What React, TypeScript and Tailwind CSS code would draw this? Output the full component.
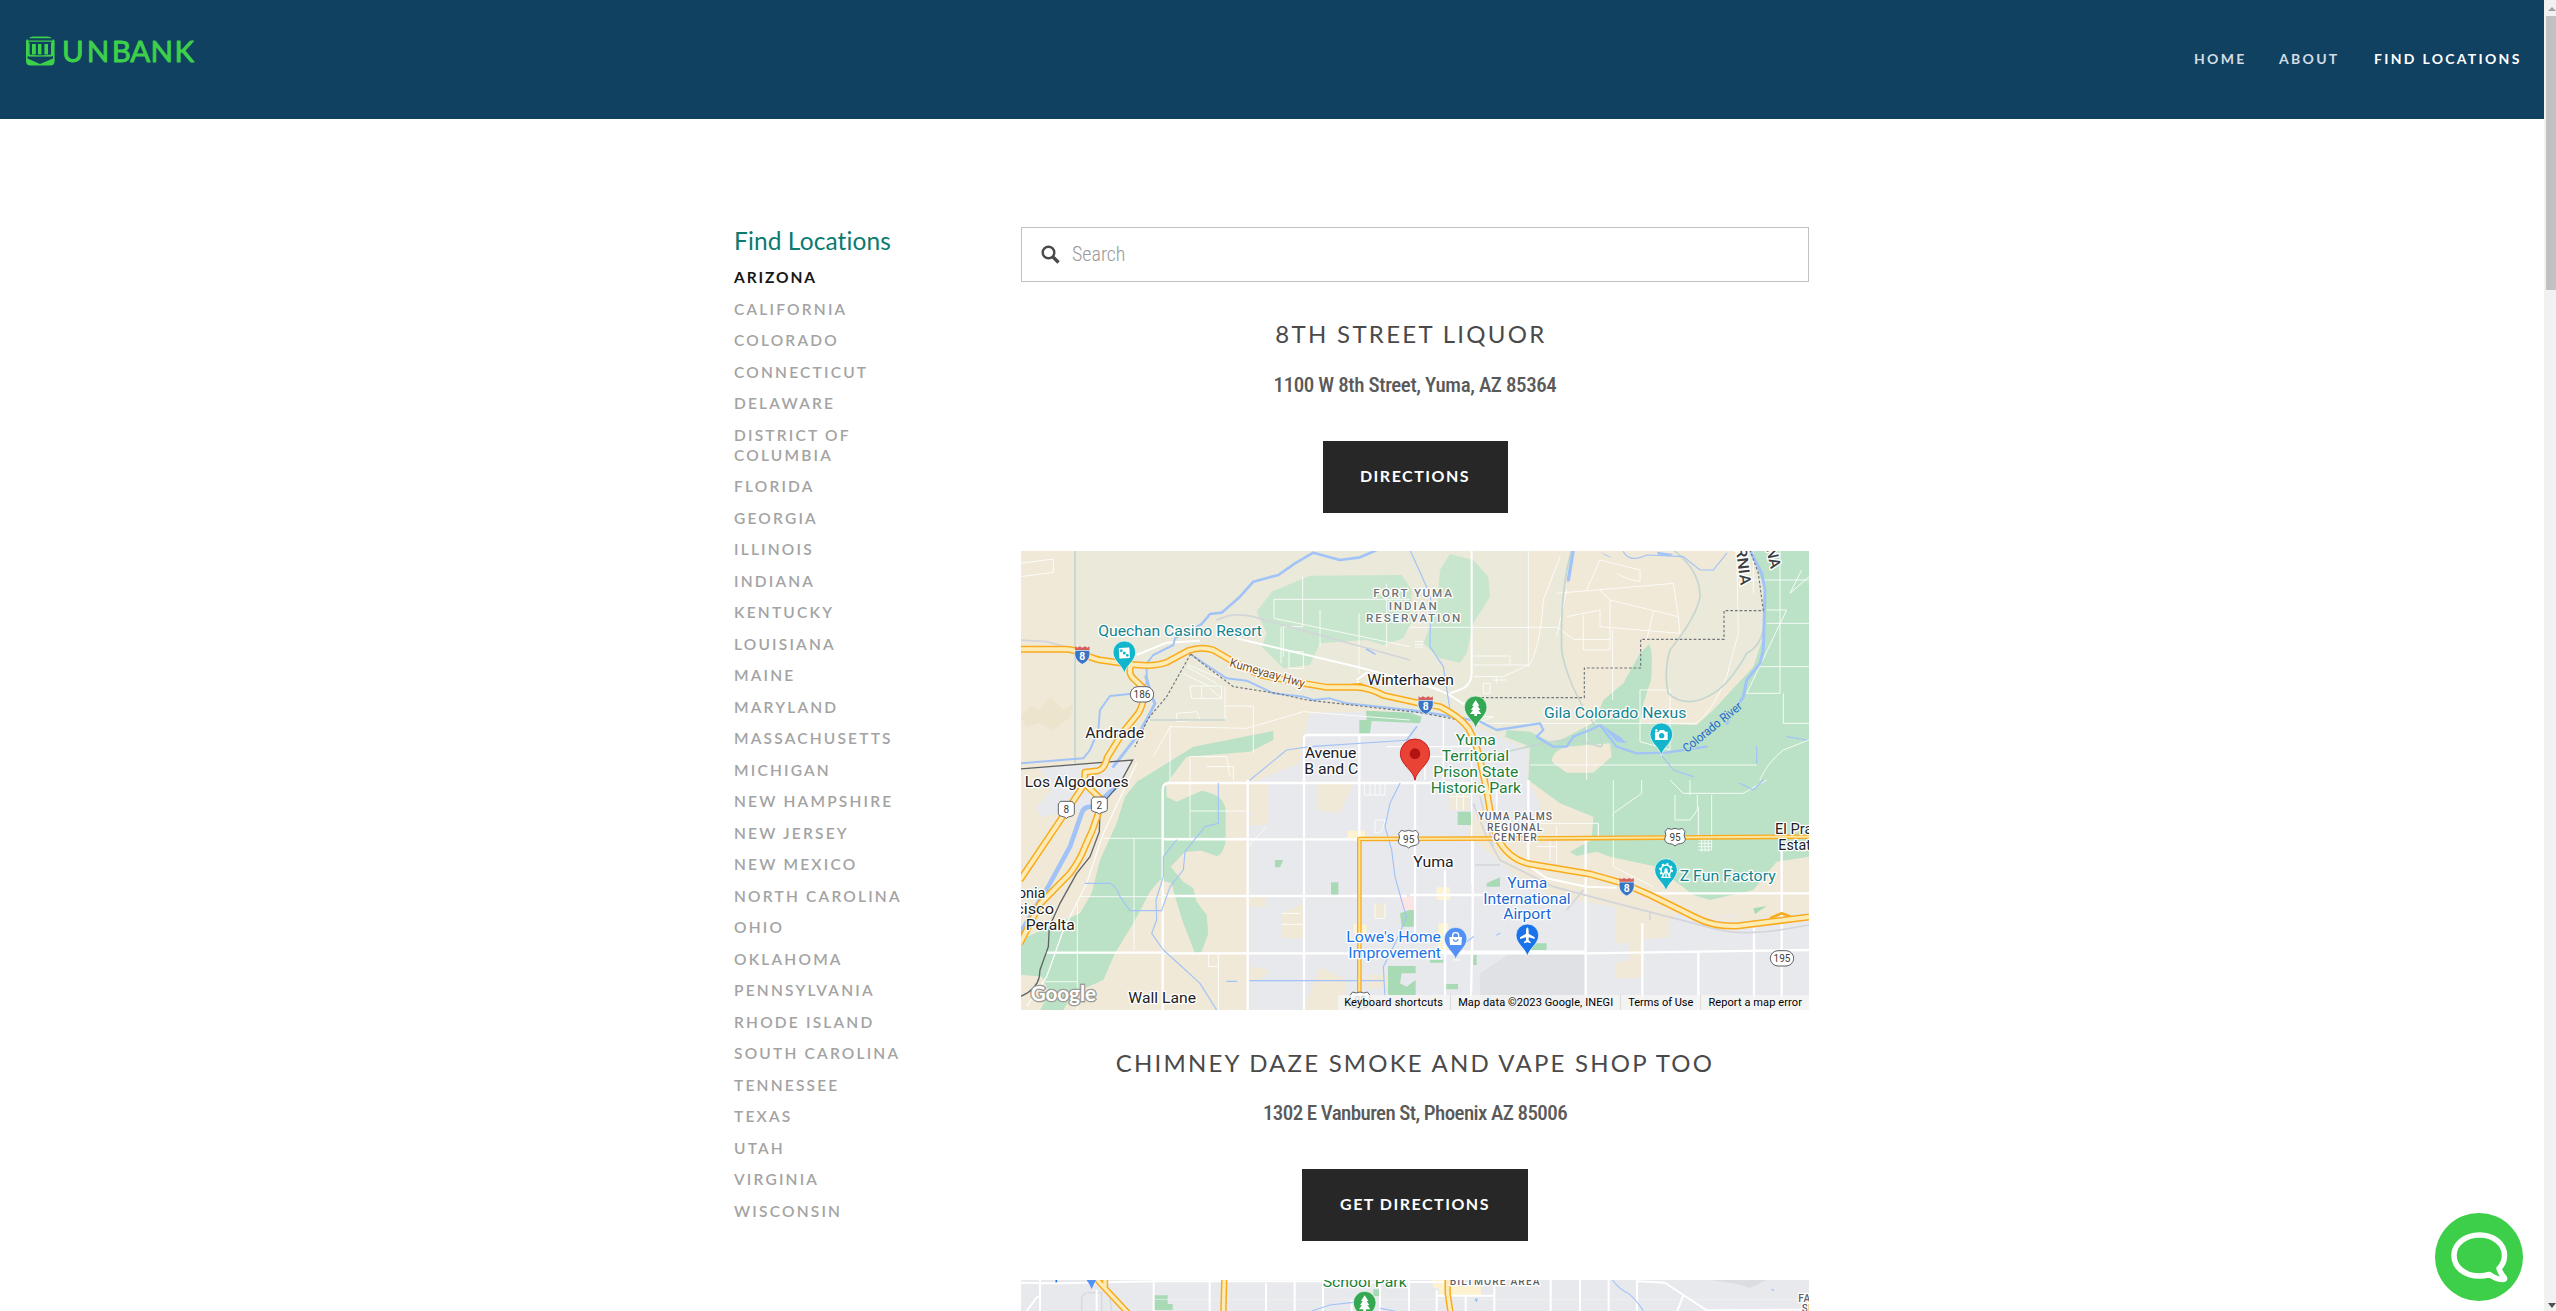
import type { ReactNode } from "react";

const states = [
  "Arizona", "California", "Colorado", "Connecticut", "Delaware", "District of Columbia", "Florida", "Georgia",
  "Illinois", "Indiana", "Kentucky", "Louisiana", "Maine", "Maryland", "Massachusetts", "Michigan",
  "New Hampshire", "New Jersey", "New Mexico", "North Carolina", "Ohio", "Oklahoma", "Pennsylvania",
  "Rhode Island", "South Carolina", "Tennessee", "Texas", "Utah", "Virginia", "Wisconsin",
];

function Logo() {
  return (
    <svg width="180" height="40" viewBox="20 30 180 40" role="img" aria-label="Unbank">
      <g fill="#3dd04a">
        <path d="M29 38.2Q30.5 36.6 33 36.6H47.5Q50.5 36.6 51.8 38.2Z" />
        <path d="M26 41Q26 39.4 28 39.2V40.4H52.5V39.2Q54.6 39.4 54.6 41V43.6H51.5V41.8H28.8V43.6H26Z" />
        <path d="M26 43H29.6V54.6L40 56H27.6V58.6L40 64 53 58.6V56H40L51 54.6V43H54.6V61Q54.6 65.6 50 65.6H30.6Q26 65.6 26 61Z" />
        <path d="M32 44H35.8V54.6H32ZM38 44H41.4V54.6H38ZM44.4 44H48V54.6H44.4Z" />
        <path d="M28.5 55.4H52V56.6H28.5Z" />
      </g>
      <text x="62 86.8 111.8 130.300 150.5 174.5" y="61.800" fontSize="29.500" fontWeight="400" fill="#3dd04a" stroke="#3dd04a" strokeWidth="0.9" strokeLinejoin="round" className="font-[Lato,sans-serif]">UNBANK</text>
    </svg>
  );
}

function Label({ x, y, w, size = 45, fill = "#202124", halo = "#fff", weight = 400, spacing = "spacingAndGlyphs", rotate = 0, children }: {
  x: number; y: number; w: number; size?: number; fill?: string; halo?: string; weight?: number;
  spacing?: "spacing" | "spacingAndGlyphs"; rotate?: number; children: ReactNode;
}) {
  return (
    <text x={x} y={y} textLength={w} lengthAdjust={spacing} fontSize={size} fontWeight={weight} fill={fill} stroke={halo}
      strokeWidth="8" strokeLinejoin="round" paintOrder="stroke" transform={rotate ? `rotate(${rotate} ${x} ${y})` : undefined}>
      {children}
    </text>
  );
}

function Pin({ x, y, fill, children }: { x: number; y: number; fill: string; children?: ReactNode }) {
  return (
    <g transform={`translate(${x} ${y})`}>
      <path d="M0 64C-4 40-34 26-34 0A34 34 0 0 1 34 0C34 26 4 40 0 64Z" fill={fill} stroke="#fff" strokeWidth="2" />
      {children}
    </g>
  );
}

function Tree() {
  return <path d="M0-22L11-5H6L14 8H8L17 20H4V26H-4V20H-17L-8 8H-14L-6-5H-11Z" fill="#fff" />;
}

function Interstate({ x, y }: { x: number; y: number }) {
  return (
    <g transform={`translate(${x} ${y})`}>
      <path d="M-22-14C-26 8-16 20 0 28 16 20 26 8 22-14Z" fill="#3a74c4" stroke="#fff" strokeWidth="2" />
      <path d="M-21-26L-15-22-8-26 0-22 8-26 15-22 21-26 22-15H-22Z" fill="#d65f5f" />
      <text y="15" textAnchor="middle" fontSize="31" fontWeight="700" fill="#fff">8</text>
    </g>
  );
}

function OvalShield({ x, y, children }: { x: number; y: number; children: string }) {
  return (
    <g transform={`translate(${x} ${y})`}>
      <rect x="-35" y="-23" width="70" height="46" rx="23" fill="#fff" stroke="#5f6368" strokeWidth="3" />
      <text y="11" textAnchor="middle" fontSize="30" fill="#3c4043">{children}</text>
    </g>
  );
}

function UsShield({ x, y }: { x: number; y: number }) {
  return (
    <g transform={`translate(${x} ${y})`}>
      <path d="M-22-26Q-12-20 0-26 12-20 22-26L30-16Q24-6 31 6 30 18 16 20 6 20 0 27-6 20-16 20-30 18-31 6-24-6-30-16Z" fill="#fff" stroke="#5f6368" strokeWidth="3" />
      <text y="11" textAnchor="middle" fontSize="30" fill="#3c4043">95</text>
    </g>
  );
}

function MexShield({ x, y, children }: { x: number; y: number; children: string }) {
  return (
    <g transform={`translate(${x} ${y})`}>
      <path d="M-18-25H18Q19-20 24-18V12Q24 18 14 20 5 21 0 26-5 21-14 20-24 18-24 12V-18Q-19-20-18-25Z" fill="#fff" stroke="#5f6368" strokeWidth="3" />
      <text y="11" textAnchor="middle" fontSize="30" fill="#3c4043">{children}</text>
    </g>
  );
}

const interstate8 = "M0 298H140C180 300 200 322 240 330L330 343Q400 352 440 337L505 302Q545 288 580 300L640 335 720 375 850 400 920 412H1010Q1050 414 1090 436L1200 460 1260 470Q1320 500 1345 535 1365 570 1378 620L1400 720 1410 780Q1420 840 1435 870 1470 930 1530 942L1710 972 1810 1000 1890 1035 2030 1104Q2080 1130 2150 1128L2367 1101";
const yumaRoads = [
  interstate8,
  "M333 345Q322 372 345 390L368 412Q378 450 355 490L310 545 262 622Q255 655 235 662L195 667 193 700 240 745 235 790Q220 840 195 890 180 930 150 970L60 1062 0 1180",
  "M195 700L120 812 0 990",
];

function YumaMap() {
  return (
    <svg viewBox="3 3 2364 1377" preserveAspectRatio="none" className="block h-full w-full font-[Roboto,sans-serif]">
      <rect width="2370" height="1380" fill="#f0e9d8" />
      {/* reservation land */}
      <path d="M165 0H1640L1630 250 1640 400 1700 520 1570 600 1525 650 1200 490 940 460 640 412 520 315 440 440 385 510 330 630 165 640Z" fill="#ebe9da" />
      <path d="M615 510H385L440 440 515 320 615 400Z" fill="#ebe9da" />
      <path d="M2030 70L2200 0 2235 120 2228 300 2100 420 2030 460 1960 440 1940 350 2000 240 2040 140Z" fill="#ebe9da" />
      <path d="M1527 0H1640L1600 80 1560 270 1527 350Z" fill="#f0e9d8" />
      {/* built-up land */}
      <path d="M870 490L1170 480 1330 515 1525 600V690L1565 690 1620 800 1500 900 1560 940 1900 1010 2060 1100 2367 1080V1380H975L980 1290 900 1250 850 1380H690V700L840 640 850 560Z" fill="#e8e9ed" />
      <path d="M60 655L330 635 310 690 290 730 200 780 60 800 50 770 95 720Z" fill="#e8e9ed" />
      <path d="M685 1040H735V1070H685ZM690 700H745V820H710L690 780ZM895 700H1000L960 790 890 780ZM690 800L740 800 740 825H690ZM785 1090L850 1060V1165H785ZM690 1250L750 1260 720 1290H690ZM1060 1060H1095V1105H1060ZM1290 730H1350V780H1290Z" fill="#f0e9d8" />
      <path d="M1565 690L1625 760 1720 800 1715 870 1800 910 1920 1000 2070 1100 2150 1100 2220 1050 2280 935 2367 920V1085L2150 1115 2060 1105 1980 1080 1950 1110V1160L1865 1170V1285H1785V1240L1830 1230V1180H1785V1070L1600 1040 1480 970 1350 860V800L1400 760 1460 830 1500 880 1560 870V760L1525 690Z" fill="#f0e9d8" />
      <path d="M1380 1270L1470 1210H1700V1380H1380Z" fill="#e0e1e5" />
      <path d="M1040 1315H1120V1275H1040Z" fill="#f0e9d8" />
      {/* parks and farmland */}
      <g fill="#c8e6cd">
        <path d="M710 185L755 125 870 77 1145 75 1175 120 1172 220 1150 265 1090 285 1040 270 900 280 870 345 790 355 725 290 740 250Z" />
        <path d="M1260 60L1290 12 1360 30 1405 80 1410 140 1360 220 1340 310 1320 338 1260 325 1210 280 1250 180Z" />
      </g>
      <g fill="#bbe2c6">
        <path d="M360 690L520 590 760 543 760 570 690 605 500 620 440 700Z" />
        <path d="M355 690H438L440 740 470 755 545 722Q617 735 617 785V870Q610 915 590 918L545 902 495 905 452 950 490 995 520 1015 530 1055 560 1095 565 1150 545 1205 527 1215 490 1120 465 1040 455 1000 420 990 390 1025 340 1120 285 1210 250 1290 160 1330 130 1380H60L90 1330 65 1280 0 1274V1170L180 1090 215 1030 240 930 290 820 315 740Z" />
        <path d="M2190 0H2367V920L2270 935 2200 1020 2070 1050 2020 1035 1910 950 1770 920 1730 905 1670 918 1650 905 1715 870 1720 800 1620 760 1525 690 1530 590 1455 560 1460 540 1530 545 1600 580 1640 560 1725 515 1750 450 1810 400 1860 310 1887 283Q1900 300 1893 390L1870 460 1860 520 2030 525 2080 480 2200 350 2230 260 2235 120Z" />
      </g>
      <path d="M1595 630Q1600 600 1640 590L1770 580 1775 620 1720 668H1640L1600 640Z" fill="#f0e9d8" />
      <g fill="#a8dab5">
        <path d="M1038 482L1170 488 1205 500 1200 520 1055 513 1050 550H1018V510H1040ZM765 930H790L780 952H765ZM933 997H955V1034H933ZM1104 1248H1187V1270H1145L1140 1300 1160 1310 1187 1290V1335H1104ZM1140 1090L1185 1075V1130H1145ZM1313 785H1352L1356 825H1313ZM1400 1000L1440 982V1010H1400ZM1276 1302H1314V1318H1276ZM1520 1180H1580V1200H1520ZM2200 1075L2240 1068 2205 1092ZM1360 1215H1370V1245H1360ZM1230 1230H1270V1238H1230Z" />
      </g>
      <path d="M983 842H1035V875H1010L983 865ZM1250 1012H1290V1050H1250ZM1255 1120H1285V1200H1255ZM1000 1120L1040 1125V1150H1000Z" fill="#fdf3d0" />
      <path d="M1132 1040H1185V1080H1150Z" fill="#fbe4e4" />
      <path d="M0 500L30 470 60 480 90 440 130 480 160 460 150 500 100 540 60 520 20 530Z" fill="#e9e1c9" opacity="0.7" />

      {/* thin local roads */}
      <g fill="none" stroke="#fff" strokeWidth="3" opacity="0.85">
        <path d="M0 40L100 27V67L0 80M848 80V230L790 230V320M762 148H1170M762 148V205L1170 290M1017 190V370M783 230V340M900 180V290M807 305H850V355H807ZM1100 100V290" />
        <path d="M615 468H700V610M450 530V690M390 512L380 510M400 620L450 530 680 535 850 485 1170 510M470 490L530 485 540 510 470 515ZM615 410V510M510 690V620H620L630 680M560 650H640V690" />
        <path d="M510 408H605V445H515ZM545 408V445M570 415L605 445M500 350L590 400M490 370L570 410M505 345L600 385" />
        <path d="M1525 0V345H1360M1170 232H1610M1360 318H1470V345M1360 380H1450L1525 345M1525 350Q1560 300 1570 150L1620 20M1610 130L1960 100M1610 230L1660 268H1770M1690 195V300H1770V150L1740 120M1770 150L1975 200L1980 250L1740 230V180L1640 200M1900 185L1880 270M1700 120L1740 30 1860 60V95L1820 85 1790 70M1960 100L1975 200M1640 120L1610 260M1778 240V450" />
        <path d="M2150 0 2155 250 2120 380Q2080 480 2030 520L1370 520 1420 500H1360M1530 645H2210M2200 0V130M2280 0V430H2180L2300 180H2240M2345 60L2310 130 2367 80M2170 90H2367M2240 220H2367M2210 350H2367M2220 690Q2240 640 2290 600L2367 570M2290 430V520H2367M1780 690V800M1865 690V730L1780 790V950L1900 1010M1950 690L1990 730H2170L2240 690M1965 735V810L2010 810 2032 780V735M2010 690L2010 735M2075 735V900M2035 770V860M1860 420V575L1950 600V420H1860M1700 520V690" />
        <path d="M250 865H680M342 865V1200M172 1060V1380M180 1040H425M75 1295H172M510 690V865M510 783H680M565 1210V1250H595V1210M595 1210V1380M683 890L740 830M785 1123H850M785 1090H840" />
        <path d="M1065 1060V1105M1095 1060V1105H1065M1033 700V735H1095V700M1050 700V735M1065 700V735M1080 700V735M1065 810H1095L1085 845 1065 850ZM1310 720V780M1330 720V780M1290 740H1350M1525 820H1735V870M1610 830V940M1590 870V930M1550 890H1610M1735 820V870" />
        <path d="M2035 870H2075M2035 880H2075M2035 890H2075M2035 900H2075M2045 865V905M2055 865V905M2065 865V905M1185 275H1210M1185 283H1210M1185 291H1210M1390 400H1410V430H1390ZM1420 390H1460M1430 380V400M1300 1230H1320" />
      </g>
      {/* arterials */}
      <g fill="none" stroke="#fff" strokeWidth="7">
        <path d="M428 1380V720Q428 700 445 699H1350M683 690V1380M852 1380V565Q852 555 865 555H1170M1018 555V870M425 868H1018M425 1038H1160M75 1208H420L450 1210H1700L2367 1200M1185 690V1160M1275 960V1380M1358 870V1110L1352 1380M1170 1035H1400M1697 870V1380M1867 1120V1380M2035 1205V1380M2202 1205V1380M2202 1205V1120M2285 880V1380M1900 1030H2367M1697 1205H1170M1525 690V940" />
        <path d="M350 315L440 278 540 272M650 265L1010 350 1200 400 1280 430 1360 480M1355 0V370Q1355 400 1330 415L1290 430M1200 400L1260 420M1430 720V760M1010 390L1040 368 1050 370M1530 950L1580 985 1700 1010 1790 1013M1010 395L1060 430" strokeWidth="6" />
        <path d="M1100 590H1355V1000M1270 500V700M1180 620H1340M1215 600V690M1430 690V850" strokeWidth="4" />
        <path d="M350 640L250 850 200 1000 130 1140 80 1280 20 1370" stroke="#fbfbfb" strokeWidth="4" />
      </g>
      {/* county lines, canals and rail */}
      <path d="M165 0V640M390 510H615M1655 0Q1620 120 1625 300 1640 400 1720 520 1760 590 1740 590 1660 560 1600 575 1520 590 1440 610M1960 0Q2040 60 2040 140 2030 200 1950 300 1930 370 1945 430 2000 480 2080 430 2130 400 2180 310 2220 290 2230 240" fill="none" stroke="#c3d6d0" strokeWidth="5" />
      <path d="M590 210Q640 185 700 200L1170 330M0 270L80 275 170 300M1360 760L1395 850 1440 930 1600 1010 1790 1060 2060 1130Q2150 1160 2280 1140L2367 1125M1640 1080L1690 1020M1380 740L1420 890M1365 945H1440M1890 1090V1110" fill="none" stroke="#d3d5da" strokeWidth="5" />
      {/* rivers */}
      <g fill="none" stroke="#a2c3f7" strokeLinecap="round" strokeLinejoin="round">
        <path d="M1070 0L1020 22 960 30 880 8 825 40 775 75 700 95 660 140 605 188 570 192 545 222" strokeWidth="8" />
        <path d="M545 222L465 265M465 265L460 285 400 315 380 340V400L350 430 270 438 240 480 235 540 210 600 190 625 0 640" strokeWidth="6" />
        <path d="M515 315L560 345 620 385 680 392 760 430 850 440 880 450 930 445 980 460 1170 480" strokeWidth="6" />
        <path d="M378 380L395 440 405 460 385 500 350 560 280 650" strokeWidth="9" />
        <path d="M300 700L250 745M215 770Q190 770 185 790L150 890 90 1000 0 1150" strokeWidth="14" />
        <path d="M1170 480L1300 500 1380 515 1430 540 1560 520 1570 540 1550 560 1600 590 1640 590 1660 560 1710 540 1740 525 1790 590 1850 610 1940 608 1990 600 2060 590" strokeWidth="7" />
        <path d="M2190 0L2225 70 2235 120 2230 300 2220 340 2180 390 2170 440 2120 520" strokeWidth="9" />
        <path d="M1660 0L1645 90" strokeWidth="10" />
        <path d="M1170 0L1215 100 1232 140 1230 290 1270 350 1290 480M195 1000H270Q290 1010 300 1040L330 1082H425L450 1010 490 960 495 905 555 830 595 820V700M470 870L430 920V980L408 1050 410 1110 395 1150 430 1200 480 1245 540 1300 590 1380M1140 700L1110 760 1095 830 1115 900 1125 980 1150 1070 1160 1100 1130 1170 1090 1250 1095 1340M690 690L800 600 870 590 1170 570M620 1294L650 1294M690 1292H1090M1340 1175L1360 1160M1430 1155L1440 1150M1810 5Q1830 40 1880 15L1990 20 2040 60 2080 60 2120 10M2160 700L2200 720 2230 690M1920 610L1960 660 2020 680M2210 590V640M2300 560L2360 570" strokeWidth="3.5" />
        <path d="M1040 298L1065 312M1160 570L1190 530" strokeWidth="5" />
      </g>
      <path d="M1745 525L1800 560 1820 580 1790 575ZM1910 5L1960 12 1950 18 1915 14ZM1740 5L1780 25 1760 18Z" fill="#a2c3f7" />
      {/* borders */}
      <path d="M512 312L440 440 385 505 345 590M512 312L560 350 640 410 770 430 860 450 1200 488 1330 512M1370 443H1693V354H1862V268H2112V182H2230L2215 70 2190 0" fill="none" stroke="#70757a" strokeWidth="3.500" strokeDasharray="8 6" />
      <path d="M0 657L338 630 300 700 240 770 238 845 210 920 170 970 120 1060 88 1130 85 1190 60 1260 58 1280Q50 1320 0 1340" fill="none" stroke="#5f6368" strokeWidth="4" />

      {/* highways */}
      <g fill="none" strokeLinejoin="round">
        <path d="M1018 1330V867L1600 865 2367 860" stroke="#f9ab1e" strokeWidth="14" />
        <path d="M1018 1330V867L1600 865 2367 860" stroke="#fbe5a3" strokeWidth="6" />
        {yumaRoads.map((d) => <path key={d} d={d} stroke="#f9ab1e" strokeWidth="21" />)}
        <path d="M960 410L1020 402 1080 430M1660 960L1700 965 1730 985M2250 1105L2285 1090 2320 1103" stroke="#f9ab1e" strokeWidth="8" />
        {yumaRoads.map((d) => <path key={d} d={d} stroke="#fdebb6" strokeWidth="12" />)}
      </g>

      {/* shields */}
      <Interstate x={187} y={315} />
      <Interstate x={1217} y={465} />
      <Interstate x={1820} y={1010} />
      <OvalShield x={366} y={433}>186</OvalShield>
      <OvalShield x={2286} y={1225}>195</OvalShield>
      <MexShield x={139} y={779}>8</MexShield>
      <MexShield x={238} y={766}>2</MexShield>
      <UsShield x={1166} y={867} />
      <UsShield x={1965} y={861} />
      <UsShield x={1020} y={1352} />

      {/* place names */}
      <Label x={1060} y={142} w={236} size={35} fill="#70757a" weight={500} spacing="spacing">FORT YUMA</Label>
      <Label x={1106} y={180} w={144} size={35} fill="#70757a" weight={500} spacing="spacing">INDIAN</Label>
      <Label x={1038} y={217} w={283} size={35} fill="#70757a" weight={500} spacing="spacing">RESERVATION</Label>
      <Label x={1042} y={404} w={260}>Winterhaven</Label>
      <Label x={196} y={564} w={176}>Andrade</Label>
      <Label x={854} y={625} w={155}>Avenue</Label>
      <Label x={853} y={672} w={162}>B and C</Label>
      <Label x={14} y={710} w={312}>Los Algodones</Label>
      <Label x={-42} y={1045} w={118}>olonia</Label>
      <Label x={-84} y={1092} w={186}>rancisco</Label>
      <Label x={17} y={1139} w={147}>Peralta</Label>
      <Label x={325} y={1358} w={203}>Wall Lane</Label>
      <Label x={1180} y={951} w={121}>Yuma</Label>
      <Label x={2265} y={851} w={162}>El Prado</Label>
      <Label x={2275} y={899} w={142}>Estates</Label>
      <Label x={1374} y={811} w={222} size={31} fill="#5f6368" weight={500} spacing="spacing">YUMA PALMS</Label>
      <Label x={1401} y={842} w={166} size={31} fill="#5f6368" weight={500} spacing="spacing">REGIONAL</Label>
      <Label x={1420} y={872} w={130} size={31} fill="#5f6368" weight={500} spacing="spacing">CENTER</Label>
      <Label x={2140} y={-68} w={176} size={46} fill="#3c4043" weight={500} rotate={83}>FORNIA</Label>
      <Label x={2216} y={-100} w={162} size={46} fill="#3c4043" weight={500} rotate={77}>RIZONA</Label>
      <Label x={235} y={259} w={491} fill="#12848f">Quechan Casino Resort</Label>
      <Label x={1572} y={505} w={427} fill="#12848f">Gila Colorado Nexus</Label>
      <Label x={1979} y={993} w={288} fill="#12848f">Z Fun Factory</Label>
      <Label x={1307} y={586} w={120} fill="#188038">Yuma</Label>
      <Label x={1265} y={633} w={202} fill="#188038">Territorial</Label>
      <Label x={1240} y={681} w={255} fill="#188038">Prison State</Label>
      <Label x={1232} y={728} w={271} fill="#188038">Historic Park</Label>
      <Label x={1462} y={1013} w={120} fill="#1967d2">Yuma</Label>
      <Label x={1390} y={1061} w={262} fill="#1967d2">International</Label>
      <Label x={1450} y={1108} w={143} fill="#1967d2">Airport</Label>
      <Label x={979} y={1176} w={284} fill="#1a73e8">Lowe's Home</Label>
      <Label x={985} y={1224} w={278} fill="#1a73e8">Improvement</Label>
      <Label x={627} y={349} w={232} size={37} fill="#7b4a12" rotate={16}>Kumeyaay Hwy</Label>
      <Label x={2001} y={609} w={216} size={37} fill="#1b66d1" halo="#bbe2c6" rotate={-39}>Colorado River</Label>

      {/* places */}
      <Pin x={313} y={307} fill="#12b5cb">
        <rect x="-16" y="-14" width="32" height="32" rx="3" fill="#fff" transform="rotate(-4)" />
        <g fill="#12b5cb"><circle cx="-9" cy="-5" r="4" /><circle cx="0" cy="2" r="4.5" /><circle cx="9" cy="9" r="4" /></g>
      </Pin>
      <Pin x={1367} y={472} fill="#34a853"><Tree /></Pin>
      <Pin x={1924} y={553} fill="#12b5cb">
        <path d="M-19-8H-8L-4-13H8L12-8H19V17H-19Z" fill="#fff" />
        <circle cx="1" cy="4" r="8" fill="#12b5cb" />
        <path d="M-15-16V-8M-19-12H-11" stroke="#fff" strokeWidth="3" />
      </Pin>
      <Pin x={1938} y={960} fill="#12b5cb">
        <circle r="15" fill="none" stroke="#fff" strokeWidth="4" />
        <circle r="18" fill="none" stroke="#fff" strokeWidth="6" strokeDasharray="6 8" />
        <path d="M0 0V22M-12 22L0 0 12 22Z" fill="#12b5cb" stroke="#fff" strokeWidth="4" />
        <circle r="5" fill="#fff" />
      </Pin>
      <Pin x={1522} y={1156} fill="#1a73e8">
        <path d="M0-24Q4-22 4-14V-5L22 6V11L4 6V15L10 20V24L0 21-10 24V20L-4 15V6L-22 11V6L-4-5V-14Q-4-22 0-24Z" fill="#fff" />
      </Pin>
      <Pin x={1307} y={1166} fill="#5491f5">
        <path d="M-19-5H19L17 19H-17Z" fill="#fff" />
        <path d="M-9-4V-10Q-9-18 0-18 9-18 9-10V-4" fill="none" stroke="#fff" strokeWidth="4" />
        <path d="M-8 2Q0 14 8 2" fill="none" stroke="#5491f5" strokeWidth="4" />
      </Pin>
      <path d="M1185 691C1181 660 1141 645 1141 611A44 44 0 0 1 1229 611C1229 645 1189 660 1185 691Z" fill="#ea4335" stroke="#c5221f" strokeWidth="3" />
      <circle cx="1185" cy="611" r="16" fill="#b31412" />
      <text x="32" y="1352" textLength="196" lengthAdjust="spacingAndGlyphs" fontSize="62" fontWeight="700" fill="#fff" stroke="#9a9a94" strokeWidth="8" paintOrder="stroke" className="font-[Lato,sans-serif]">Google</text>
    </svg>
  );
}

function PhoenixMap() {
  return (
    <svg viewBox="3 30 2364 93" preserveAspectRatio="none" className="block h-full w-full font-[Roboto,sans-serif]">
      <rect width="2370" height="124" fill="#e8e9ed" />
      <path d="M402 76H443V102H458V120H402ZM1060 58H1078V78H1060Z" fill="#a8dab5" />
      <path d="M1235 30H1290L1383 45V75H1257V56L1240 52Z" fill="#fdf3d0" />
      <path d="M2070 30L2150 42 2190 54 2240 30Z" fill="#dcdde1" />
      <path d="M185 123V85Q188 68 210 68H245V123M275 123L270 85" fill="none" stroke="#d6d8dc" strokeWidth="4" />
      <path d="M400 88H2367" stroke="#f1f2f4" strokeWidth="2" />
      <g fill="none" stroke="#fff" strokeWidth="6">
        <path d="M0 38L120 40 400 34H980L1100 40 1170 36H1270M60 30V123M20 123L50 82 60 80M230 60V123M401 30V123M569 30V123M738 40V123M824 30V123M909 30V123M995 90V123M1080 30V123M1167 30V123M1250 60V123M1337 75V123M1423 30V123M1423 77H1250M1592 30V123M1680 30V123M1766 30V123M1851 123V34L1935 38 1990 75 2060 121 2367 119M1990 75L1972 123" />
      </g>
      <path d="M875 123L930 105 1000 97M1080 115L1125 123M1777 30Q1800 60 1825 70 1850 90 1870 123M2255 57L2262 62" fill="none" stroke="#a2c3f7" strokeWidth="3.5" />
      <path d="M1364 86H1374L1369 97Z" fill="#8ab4f8" />
      <path d="M232 30L325 130M255 25V55M613 20L610 130M1283 20V70L1292 130" fill="none" stroke="#f9ab1e" strokeWidth="19" />
      <path d="M232 30L325 130M255 25V55M613 20L610 130M1283 20V70L1292 130" fill="none" stroke="#fdebb6" strokeWidth="10" />
      <path d="M198 28H230Q222 40 215 57 208 40 198 28Z" fill="#5491f5" />
      <path d="M109 24V37" stroke="#1a73e8" strokeWidth="5" />
      <Label x={908} y={51} w={252} fill="#188038">School Park</Label>
      <Label x={1289} y={46} w={270} size={31} fill="#5f6368" weight={500} spacing="spacing">BILTMORE AREA</Label>
      <Label x={2335} y={95} w={120} size={31} fill="#5f6368" weight={500} spacing="spacing">FALCON</Label>
      <Label x={2345} y={125} w={110} size={31} fill="#5f6368" weight={500} spacing="spacing">SPRING</Label>
      <Pin x={1034} y={98} fill="#34a853"><Tree /></Pin>
    </svg>
  );
}

export default function App() {
  return (
    <div className="flex h-[1311px] w-full overflow-hidden bg-white font-[Lato,sans-serif]">
      <div className="flex min-w-0 flex-1 flex-col">
        <header className="flex h-[119px] shrink-0 items-start justify-between bg-[#104161] pt-[30px] pr-[22px] pl-5">
          <Logo />
          <nav className="mt-[19px] flex text-[14px] leading-5 font-bold tracking-[2.3px] text-[#d3dce3] uppercase">
            <a className="w-[85px]">Home</a>
            <a className="w-[95px]">About</a>
            <a className="w-[148px] whitespace-nowrap text-white">Find Locations</a>
          </nav>
        </header>

        <main className="mx-auto flex w-[1076px]">
          <aside className="w-[287px] shrink-0 pt-[104px]">
            <h1 className="mb-2 text-[24.500px] leading-9 tracking-[0.1px] text-[#0a7b70]">Find Locations</h1>
            <ul className="flex w-[190px] flex-col gap-[11.5px] text-[15.500px] leading-5 font-semibold tracking-[2.2px] text-[#a3a3a3] uppercase">
              {states.map((s) => (
                <li key={s} className="pr-4 whitespace-normal first:font-bold first:tracking-[1.9px] first:text-[#161616] nth-[6]:w-[150px] not-nth-[6]:whitespace-nowrap">{s}</li>
              ))}
            </ul>
          </aside>

          <section className="flex w-[788px] flex-col items-center pt-[108px]">
            <div className="flex h-[55px] w-full items-center border border-[#c2c2c2] pl-[19px]">
              <svg width="19" height="19" viewBox="0 0 19 19" fill="none" stroke="#4a4a4a">
                <circle cx="7.5" cy="7.5" r="5.8" strokeWidth="2.4" />
                <path d="M12 12L17.5 17.5" strokeWidth="3.4" />
              </svg>
              <span className="ml-[12px] pb-px font-[Roboto,sans-serif] text-[20px] font-light text-[#999] [font-stretch:75%]">Search</span>
            </div>

            <h2 className="mt-[32px] pr-2 text-[24px] leading-10 tracking-[2.3px] text-[#4a4a4a] uppercase">8th Street Liquor</h2>
            <p className="mt-4 font-[Roboto,sans-serif] text-[21px] leading-[30px] font-medium tracking-[-0.4px] text-[#5a5a5a] [font-stretch:75%]">1100 W 8th Street, Yuma, AZ 85364</p>
            <a className="mt-[41px] flex h-[72px] w-[185px] items-center justify-center bg-[#272727] pb-0.5 text-[16px] font-bold tracking-[1.5px] text-white uppercase">Directions</a>
            <div className="relative mt-[38px] h-[459px] w-full shrink-0 overflow-hidden">
              <YumaMap />
              <div className="absolute right-0 bottom-0 flex h-[15px] items-center divide-x divide-[#dcdcdc] bg-[#f5f5f5]/80 font-[Roboto,sans-serif] text-[11px] leading-[15px] whitespace-nowrap text-black">
                <span className="pr-[7px] pl-1.5 tracking-[0.2px]">Keyboard shortcuts</span>
                <span className="px-[7px] tracking-[0.1px]">Map data ©2023 Google, INEGI</span>
                <span className="px-[7px]">Terms of Use</span>
                <span className="px-[7px] tracking-[0.1px]">Report a map error</span>
              </div>
            </div>

            <h2 className="mt-[33px] text-[24px] leading-10 tracking-[2.2px] whitespace-nowrap text-[#4a4a4a] uppercase">Chimney Daze Smoke and Vape Shop Too</h2>
            <p className="mt-[15px] font-[Roboto,sans-serif] text-[21px] leading-[30px] font-medium tracking-[-0.6px] text-[#5a5a5a] [font-stretch:75%]">1302 E Vanburen St, Phoenix AZ 85006</p>
            <a className="mt-[41px] flex h-[72px] w-[226px] items-center justify-center bg-[#272727] pb-0.5 text-[16px] font-bold tracking-[1.5px] text-white uppercase">Get Directions</a>
            <div className="mt-[39px] h-[31px] w-full shrink-0 overflow-hidden">
              <PhoenixMap />
            </div>
          </section>
        </main>
      </div>

      <div className="flex w-3 shrink-0 flex-col items-end justify-between bg-[#f1f1f1]">
        <svg width="12" height="290" viewBox="0 0 12 290">
          <path d="M4 11L8 7 12 11Z" fill="#a3a3a3" />
          <rect x="2" y="16" width="10" height="274" fill="#c1c1c1" />
        </svg>
        <svg width="12" height="10" viewBox="0 0 12 10"><path d="M4 2H12L8 7Z" fill="#505050" /></svg>
      </div>

      <button className="absolute top-[1213px] left-[2435px] size-[88px] rounded-full bg-[#3dcf4a]" aria-label="Chat">
        <svg width="88" height="88" viewBox="0 0 88 88" fill="none">
          <path d="M44.5 22C59 22 69.500 31 69.500 42.500C69.500 48 67 52.500 64 55.500C65 59 67 62 69.500 65C70 66.500 69 66.500 67 66.500C62 66.300 58 64 54.500 61.500C51 62.500 48 63 44.500 63C30 63 19 54.500 19 42.500C19 31 30 22 44.500 22Z" stroke="#fff" strokeWidth="5.500" strokeLinejoin="round" />
        </svg>
      </button>
    </div>
  );
}
